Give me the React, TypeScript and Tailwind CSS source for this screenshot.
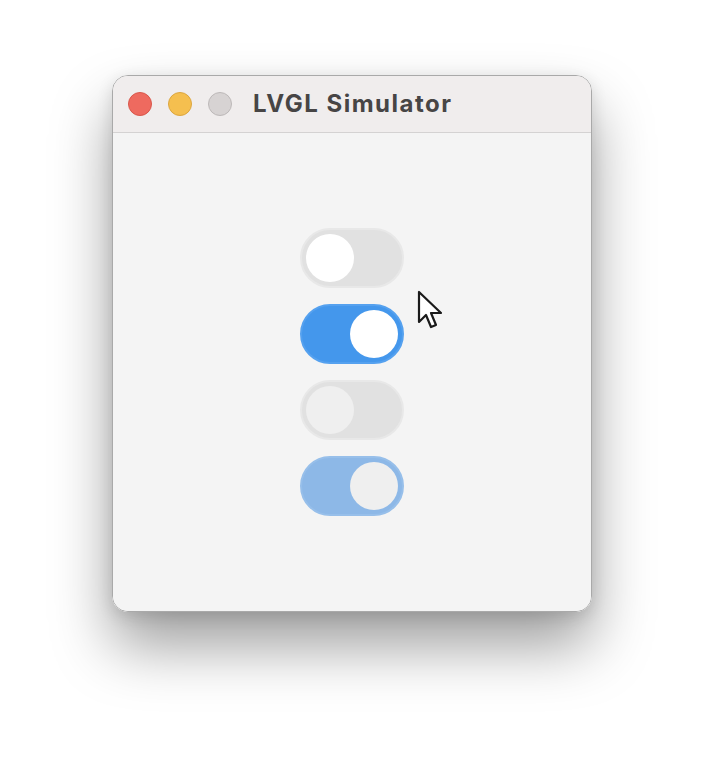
import React from "react";

type SwitchProps = {
  checked?: boolean;
  disabled?: boolean;
};

const Switch = ({ checked, disabled }: SwitchProps) => {
  let track = "bg-[#e1e1e1] border-[#e8e8e8]";
  if (checked) track = disabled ? "bg-[#8db8e7] border-[#97bfea]" : "bg-[#4497ec] border-[#55a1ef]";
  const knob = disabled ? "bg-[#efefef]" : "bg-white";
  return (
    <div
      className={`flex h-[60px] w-[104px] items-center rounded-full border-2 px-[4px] ${track} ${
        checked ? "justify-end" : "justify-start"
      }`}
    >
      <div className={`h-[48px] w-[48px] rounded-full ${knob}`} />
    </div>
  );
};

const Cursor = () => (
  <svg width="28" height="42" viewBox="0 0 28 42" className="absolute left-[117px] top-[62px]">
    <path
      d="M2 2 L2 32 L9 25 L14 37 L19 35 L14 23 L24 23 Z"
      fill="white"
      stroke="#1a1a1a"
      strokeWidth="2.2"
      strokeLinejoin="round"
    />
  </svg>
);

export default function App() {
  return (
    <div className="h-[760px] w-[704px] bg-white pl-[112px] pt-[75px]" style={{ fontFamily: "Inter, 'Liberation Sans', sans-serif" }}>
      <div className="flex h-[537px] w-[480px] flex-col overflow-hidden rounded-[16px] border border-[#a9a9a9] shadow-[0_34px_60px_rgba(0,0,0,0.38),0_4px_16px_rgba(0,0,0,0.12)]">
        <div className="flex h-[57px] items-center border-b border-[#d4d2d2] bg-[#f0eded] pl-[15px]">
          <div className="flex gap-4">
            <div className="h-[24px] w-[24px] rounded-full border border-[#d9574b] bg-[#ee6a5f]" />
            <div className="h-[24px] w-[24px] rounded-full border border-[#dca63f] bg-[#f5bf4f]" />
            <div className="h-[24px] w-[24px] rounded-full border border-[#bdb9b9] bg-[#d7d3d3]" />
          </div>
          <span className="ml-[21px] text-[24px] font-bold tracking-[1.5px] text-[#474545]">LVGL Simulator</span>
        </div>
        <div className="flex flex-1 items-center justify-center bg-[#f4f4f4]">
          <div className="relative flex flex-col gap-4">
            <Switch />
            <Switch checked />
            <Switch disabled />
            <Switch checked disabled />
            <Cursor />
          </div>
        </div>
      </div>
    </div>
  );
}
